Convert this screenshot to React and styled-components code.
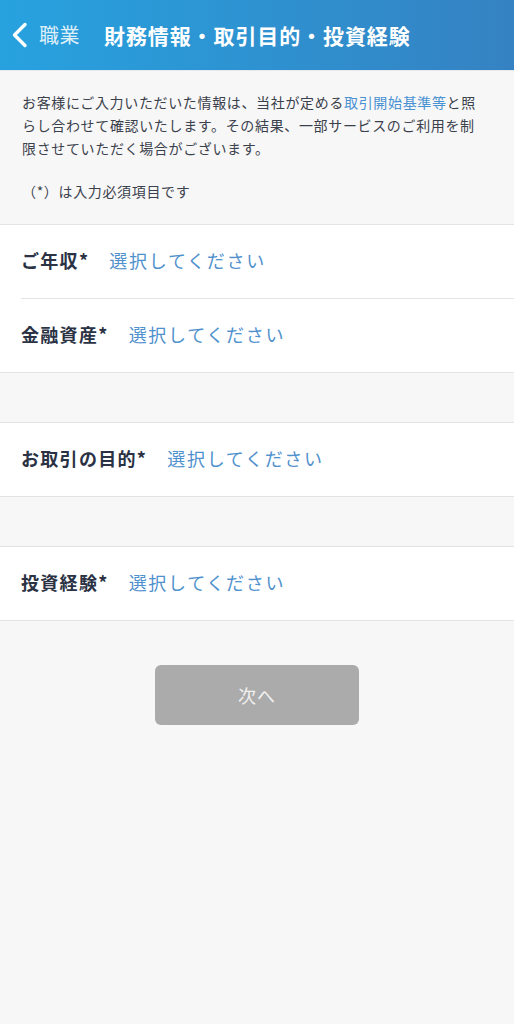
import React from "react";
import styled, { createGlobalStyle } from "styled-components";

const Global = createGlobalStyle`
  html, body { margin: 0; padding: 0; background: #f7f7f7; }
  body { font-family: "Noto Sans CJK JP", "Noto Sans", sans-serif; -webkit-font-smoothing: antialiased; }
  * { box-sizing: border-box; }
`;

const Page = styled.div`
  width: 514px;
  min-height: 1024px;
  background: #f7f7f7;
  display: flex;
  flex-direction: column;
`;

const Header = styled.header`
  height: 71px;
  background: linear-gradient(90deg, #27a2df 0%, #3582c2 100%);
  border-bottom: 1px solid #e6e9ee;
  display: flex;
  align-items: center;
  padding: 0 0 0 11px;
  color: #fff;
`;

const Back = styled.div`
  display: flex;
  align-items: center;
  gap: 11px;
  color: rgba(255, 255, 255, 0.85);
  font-size: 20px;
  letter-spacing: 0.5px;
  line-height: 1;
`;

const Title = styled.h1`
  margin: 0 0 0 24px;
  font-size: 21px;
  font-weight: 700;
  letter-spacing: 0.9px;
  line-height: 1;
  color: #fff;
  white-space: nowrap;
`;

const Intro = styled.section`
  padding: 20px 22px 21px 22px;
  color: #3b414c;
  font-size: 14px;
  line-height: 23px;
  letter-spacing: 0.65px;
  border-bottom: 1px solid #e4e4e4;
`;

const Para = styled.p`
  margin: 0;
  white-space: nowrap;
  & + & { margin-top: 20px; }
`;

const Link = styled.span`
  color: #4a92d2;
`;

const Group = styled.div`
  background: #fff;
  border-bottom: 1px solid #e2e2e2;
  border-top: ${(p) => (p.$top ? "1px solid #e2e2e2" : "none")};
  margin-top: ${(p) => p.$gap || 0}px;
`;

const Row = styled.div`
  height: ${(p) => (p.$divided ? 74 : 73)}px;
  margin-left: 21px;
  padding-bottom: 3px;
  display: flex;
  align-items: center;
  gap: 20px;
  border-bottom: ${(p) => (p.$divided ? "1px solid #e4e4e4" : "none")};
`;

const Label = styled.span`
  font-size: 18px;
  font-weight: 700;
  color: #2a3244;
  letter-spacing: 1.3px;
`;

const Value = styled.span`
  font-size: 18px;
  color: #4f91cd;
  letter-spacing: 1.7px;
`;

const ButtonWrap = styled.div`
  display: flex;
  justify-content: center;
  padding-top: 44px;
`;

const NextButton = styled.button`
  width: 204px;
  height: 60px;
  border: none;
  border-radius: 6px;
  background: #ababab;
  color: #f1f1f1;
  font-family: inherit;
  font-size: 18px;
  letter-spacing: 1px;
`;

const Field = ({ label, divided }) => (
  <Row $divided={divided}>
    <Label>{label}</Label>
    <Value>選択してください</Value>
  </Row>
);

export default function App() {
  return (
    <Page>
      <Global />
      <Header>
        <Back>
          <svg width="17" height="26" viewBox="0 0 17 26">
            <path d="M14 2.5 L3.5 13 L14 23.5" fill="none" stroke="#fff" strokeWidth="3.4" strokeLinecap="round" strokeLinejoin="round" />
          </svg>
          <span>職業</span>
        </Back>
        <Title>財務情報・取引目的・投資経験</Title>
      </Header>
      <Intro>
        <Para>
          お客様にご入力いただいた情報は、当社が定める<Link>取引開始基準等</Link>と照
          <br />
          らし合わせて確認いたします。その結果、一部サービスのご利用を制
          <br />
          限させていただく場合がございます。
        </Para>
        <Para>（*）は入力必須項目です</Para>
      </Intro>
      <Group>
        <Field label="ご年収*" divided />
        <Field label="金融資産*" />
      </Group>
      <Group $top $gap={49}>
        <Field label="お取引の目的*" />
      </Group>
      <Group $top $gap={49}>
        <Field label="投資経験*" />
      </Group>
      <ButtonWrap>
        <NextButton>次へ</NextButton>
      </ButtonWrap>
    </Page>
  );
}
